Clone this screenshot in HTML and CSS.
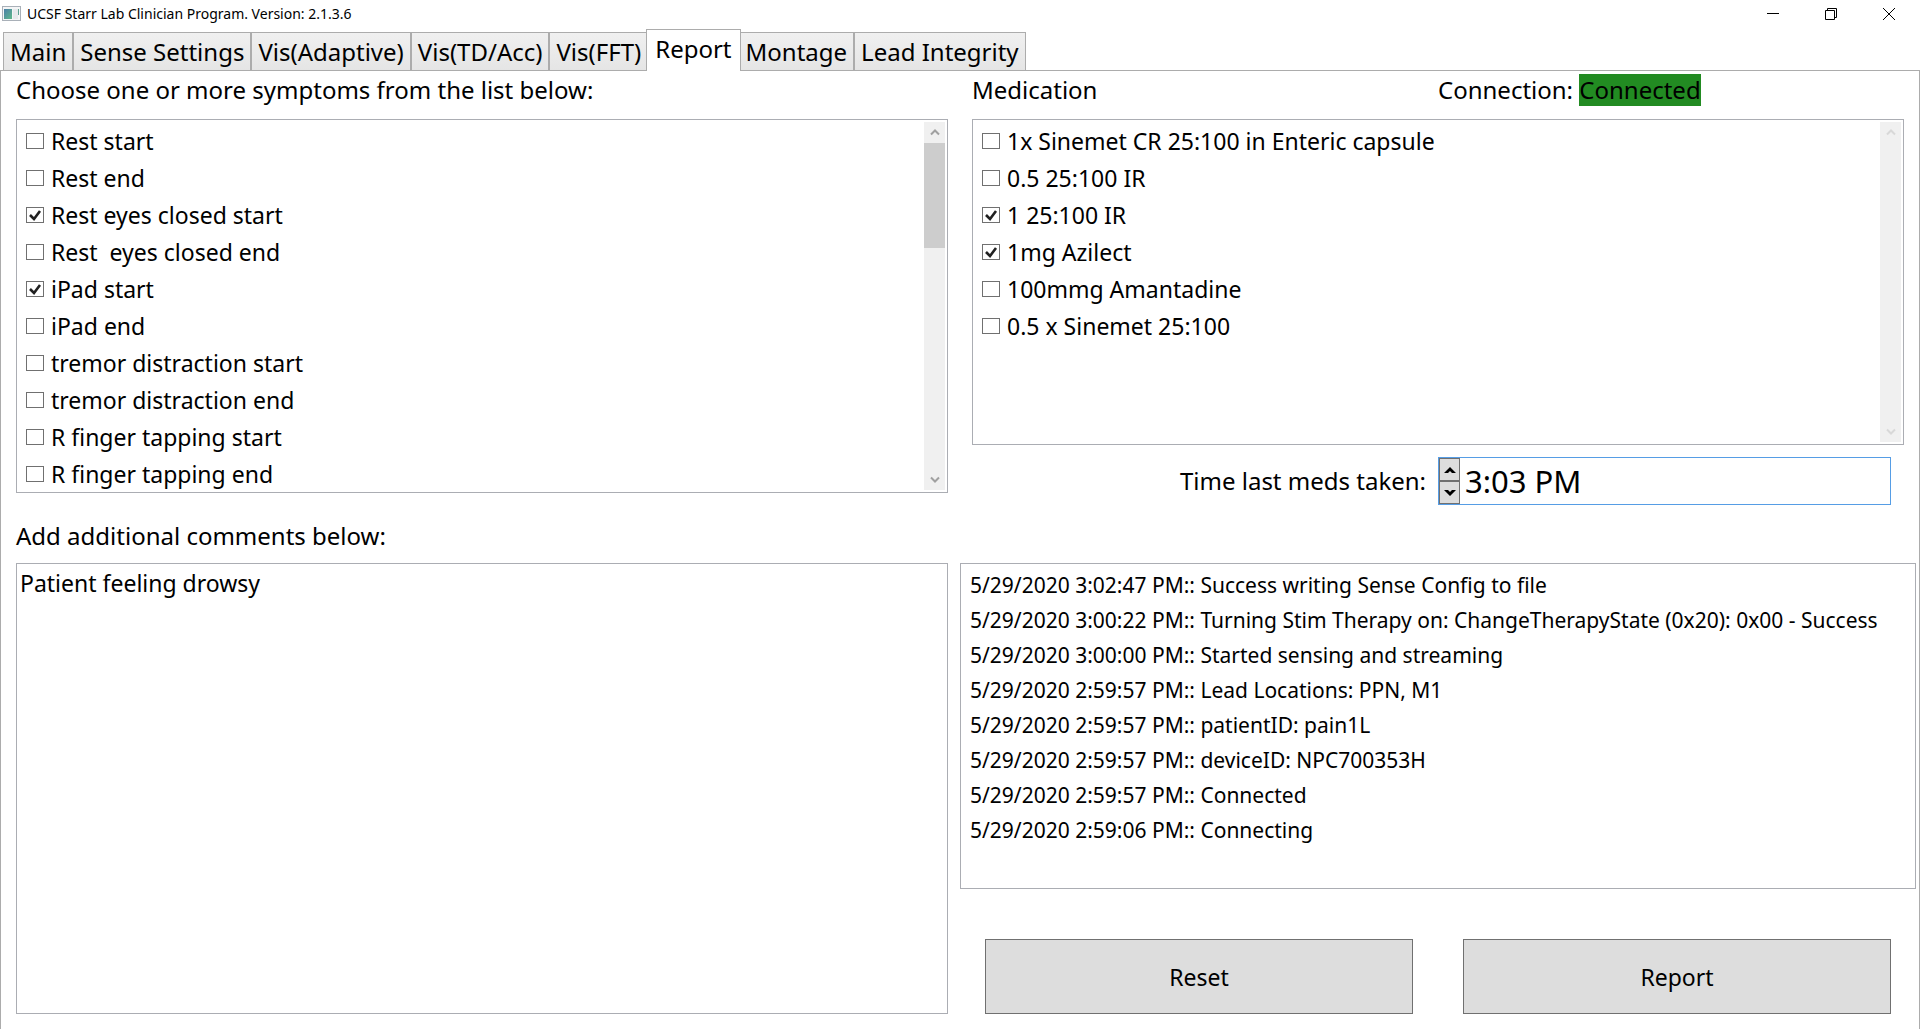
FILE: index.html
```html
<!DOCTYPE html>
<html lang="en">
<head>
<meta charset="utf-8">
<title>UCSF Starr Lab Clinician Program. Version: 2.1.3.6</title>
<link rel="stylesheet" href="styles.css">
</head>
<body>
<header class="titlebar">
  <svg class="app-icon" width="20" height="16" viewBox="0 0 20 16" aria-hidden="true">
    <defs><linearGradient id="app" x1="0" y1="0" x2="1" y2="1"><stop offset="0" stop-color="#4a7fa8"/><stop offset="1" stop-color="#5fb98a"/></linearGradient></defs>
    <rect x="0.5" y="0.5" width="18" height="14" fill="#f4f5f6" stroke="#a9b0b8"/>
    <rect x="2" y="3" width="8" height="10" fill="url(#app)"/>
    <rect x="11" y="3" width="5" height="10" fill="#e6e9ec"/>
    <rect x="16" y="3" width="1" height="6" fill="#5fa394"/>
  </svg>
  <h1 class="title">UCSF Starr Lab Clinician Program. Version: 2.1.3.6</h1>
  <div class="window-controls">
    <button type="button" aria-label="Minimize"><svg width="12" height="12" viewBox="0 0 12 12"><path d="M0 5.5H12"/></svg></button>
    <button type="button" aria-label="Restore"><svg width="12" height="12" viewBox="0 0 12 12"><path d="M.5 2.5H9.5V11.5H.5ZM2.5 2.5V.5H11.5V9.5H9.5"/></svg></button>
    <button type="button" aria-label="Close"><svg width="12" height="12" viewBox="0 0 12 12"><path d="M0 0L12 12M12 0L0 12"/></svg></button>
  </div>
</header>
<nav class="tabs" role="tablist">
  <button type="button" role="tab" class="tab">Main</button>
  <button type="button" role="tab" class="tab">Sense Settings</button>
  <button type="button" role="tab" class="tab">Vis(Adaptive)</button>
  <button type="button" role="tab" class="tab">Vis(TD/Acc)</button>
  <button type="button" role="tab" class="tab">Vis(FFT)</button>
  <button type="button" role="tab" class="tab tab-active" aria-selected="true">Report</button>
  <button type="button" role="tab" class="tab">Montage</button>
  <button type="button" role="tab" class="tab">Lead Integrity</button>
</nav>
<main class="panel">
  <h2 class="heading inset">Choose one or more symptoms from the list below:</h2>
  <div class="heading halves">
    <h2 class="inset">Medication</h2>
    <p class="connection">Connection: <span class="status">Connected</span></p>
  </div>

  <section class="area inset">
    <div class="listbox">
      <div class="items">
        <label class="item"><input type="checkbox">Rest start</label>
        <label class="item"><input type="checkbox">Rest end</label>
        <label class="item"><input type="checkbox" checked>Rest eyes closed start</label>
        <label class="item"><input type="checkbox">Rest&nbsp; eyes closed end</label>
        <label class="item"><input type="checkbox" checked>iPad start</label>
        <label class="item"><input type="checkbox">iPad end</label>
        <label class="item"><input type="checkbox">tremor distraction start</label>
        <label class="item"><input type="checkbox">tremor distraction end</label>
        <label class="item"><input type="checkbox">R finger tapping start</label>
        <label class="item"><input type="checkbox">R finger tapping end</label>
      </div>
      <div class="scrollbar">
        <button type="button" aria-label="Scroll up"><svg width="10" height="7" viewBox="0 0 10 7"><path d="M1 5.5L5 1.5L9 5.5"/></svg></button>
        <div class="track"><div class="thumb"></div></div>
        <button type="button" aria-label="Scroll down"><svg width="10" height="7" viewBox="0 0 10 7"><path d="M1 1.5L5 5.5L9 1.5"/></svg></button>
      </div>
    </div>
    <label class="comments-label" for="comments">Add additional comments below:</label>
  </section>

  <section class="area">
    <div class="listbox listbox-inset">
      <div class="items">
        <label class="item"><input type="checkbox">1x Sinemet CR 25:100 in Enteric capsule</label>
        <label class="item"><input type="checkbox">0.5 25:100 IR</label>
        <label class="item"><input type="checkbox" checked>1 25:100 IR</label>
        <label class="item"><input type="checkbox" checked>1mg Azilect</label>
        <label class="item"><input type="checkbox">100mmg Amantadine</label>
        <label class="item"><input type="checkbox">0.5 x Sinemet 25:100</label>
      </div>
      <div class="scrollbar scrollbar-idle">
        <button type="button" aria-label="Scroll up" disabled><svg width="10" height="7" viewBox="0 0 10 7"><path d="M1 5.5L5 1.5L9 5.5"/></svg></button>
        <div class="track"></div>
        <button type="button" aria-label="Scroll down" disabled><svg width="10" height="7" viewBox="0 0 10 7"><path d="M1 1.5L5 5.5L9 1.5"/></svg></button>
      </div>
    </div>
    <div class="halves time-row">
      <label class="time-label" for="time">Time last meds taken:</label>
      <div class="time-field">
        <div class="spinner">
          <button type="button" aria-label="Later"><svg width="12" height="6" viewBox="0 0 12 6"><path d="M0 6L6 0L12 6H8L6 4L4 6Z"/></svg></button>
          <button type="button" aria-label="Earlier"><svg width="12" height="6" viewBox="0 0 12 6"><path d="M0 0H4L6 2L8 0H12L6 6Z"/></svg></button>
        </div>
        <input class="time-input" id="time" type="text" value="3:03 PM">
      </div>
    </div>
  </section>

  <section class="area inset">
    <textarea class="comments" id="comments">Patient feeling drowsy</textarea>
  </section>

  <section class="area">
    <ul class="log">
      <li>5/29/2020 3:02:47 PM:: Success writing Sense Config to file</li>
      <li>5/29/2020 3:00:22 PM:: Turning Stim Therapy on: ChangeTherapyState (0x20): 0x00 - Success</li>
      <li>5/29/2020 3:00:00 PM:: Started sensing and streaming</li>
      <li>5/29/2020 2:59:57 PM:: Lead Locations: PPN, M1</li>
      <li>5/29/2020 2:59:57 PM:: patientID: pain1L</li>
      <li>5/29/2020 2:59:57 PM:: deviceID: NPC700353H</li>
      <li>5/29/2020 2:59:57 PM:: Connected</li>
      <li>5/29/2020 2:59:06 PM:: Connecting</li>
    </ul>
    <div class="actions">
      <button type="button" class="action">Reset</button>
      <button type="button" class="action">Report</button>
    </div>
  </section>
</main>
</body>
</html>
```
FILE: styles.css
```css
* { box-sizing: border-box; }

body {
  margin: 0;
  height: 100vh;
  min-height: 800px;
  display: flex;
  flex-direction: column;
  background: #fff;
  color: #000;
  font: 23px/32px "Noto Sans", sans-serif;
}

h1, h2, p, ul { margin: 0; padding: 0; font: inherit; }

button, input, textarea { font: inherit; color: inherit; margin: 0; }

button {
  display: flex;
  align-items: center;
  justify-content: center;
  padding: 0;
  border: 0;
  background: none;
}

/* Title bar */
.titlebar {
  display: flex;
  align-items: center;
  height: 28px;
  padding-left: 2px;
}

.title { margin-left: 5px; font-size: 14px; line-height: 28px; }

.window-controls { display: flex; margin-left: auto; padding-right: 2px; }

.window-controls button { width: 58px; height: 28px; }

.window-controls svg { fill: none; stroke: #000; }

/* Tabs */
.tabs {
  display: flex;
  align-items: flex-end;
  height: 42px;
  padding-left: 3px;
}

.tab {
  height: 38px;
  padding: 0 6px;
  border: 1px solid #acacac;
  border-bottom: 0;
  background: linear-gradient(#f0f0f0, #e5e5e5);
  font-size: 24px;
  white-space: nowrap;
}

.tab-active {
  z-index: 1;
  height: 42px;
  margin: 0 -2px -1px;
  padding: 0 8px 3px;
  background: #fff;
}

/* Report panel */
.panel {
  flex: 1;
  min-height: 0;
  display: grid;
  grid-template-columns: minmax(0, 1fr) minmax(0, 1fr);
  grid-template-rows: 48px minmax(0, 444fr) minmax(0, 451fr);
  padding: 0 3px 15px;
  border: 1px solid #acacac;
  border-bottom: 0;
}

.inset { padding: 0 12px; }

.heading { margin-top: 3px; font-size: 24px; }

.halves { display: grid; grid-template-columns: minmax(0, 1fr) minmax(0, 1fr); }

.status { display: inline-block; background: #228b22; }

.area { display: flex; flex-direction: column; }

.listbox {
  flex: 1;
  display: flex;
  min-height: 0;
  padding: 2px;
  border: 1px solid #abadb3;
}

.listbox-inset { margin: 0 12px; }

.items { flex: 1; padding: 0 7px; overflow: hidden; }

.item { display: flex; align-items: center; height: 37px; white-space: pre; }

.item input {
  appearance: none;
  width: 18px;
  height: 16px;
  margin-right: 7px;
  border: 1px solid #707070;
  background: #fff;
}

.item input:checked {
  background: url("data:image/svg+xml,%3Csvg xmlns='http://www.w3.org/2000/svg' viewBox='0 0 16 14'%3E%3Cpath d='M3 7L7 11L13 3' fill='none' stroke='%23212121' stroke-width='2.6'/%3E%3C/svg%3E") center no-repeat;
}

.scrollbar {
  display: flex;
  flex-direction: column;
  width: 21px;
  background: #f0f0f0;
}

.scrollbar button { height: 21px; }

.scrollbar svg { fill: none; stroke: #a0a0a0; stroke-width: 2; }

.scrollbar-idle svg { stroke: #d8d8d8; }

.track { flex: 1; }

.thumb { height: 105px; background: #cdcdcd; }

.comments-label { height: 70px; padding-top: 27px; font-size: 24px; }

.time-row { height: 48px; margin: 12px 0 58px; }

.time-label { padding-right: 12px; line-height: 48px; text-align: right; font-size: 24px; }

.time-field {
  display: flex;
  margin-right: 25px;
  border: 1px solid #569de5;
}

.spinner { display: flex; flex-direction: column; width: 21px; }

.spinner button { flex: 1; border: 1px solid #707070; background: #ddd; }

.time-input {
  flex: 1;
  min-width: 0;
  padding: 0 5px;
  border: 0;
  outline: 0;
  background: none;
  font-size: 31px;
}

.comments {
  flex: 1;
  padding: 3px;
  border: 1px solid #abadb3;
  outline: 0;
  resize: none;
}

.log {
  flex: 1;
  padding: 4px 9px;
  border: 1px solid #abadb3;
  list-style: none;
  font-size: 21px;
  line-height: 35px;
  white-space: nowrap;
}

.actions {
  display: flex;
  gap: 50px;
  height: 75px;
  margin: 50px 25px 0;
}

.action { flex: 1; border: 1px solid #707070; background: #ddd; }
```
